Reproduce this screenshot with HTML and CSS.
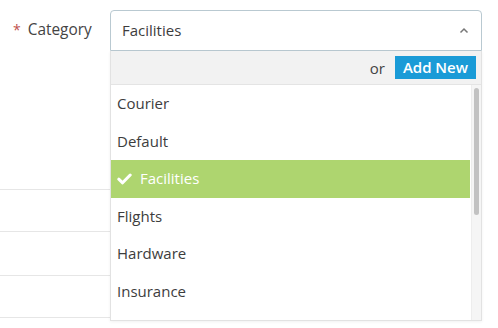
FILE: index.html
```html
<!DOCTYPE html>
<html>
<head>
<meta charset="utf-8">
<link rel="stylesheet" href="styles.css">
</head>
<body>
<div class="page">
  <div class="field">
    <div class="label"><span class="req">*</span> Category</div>
    <div class="select-wrap">
      <div class="select">
        <span class="value">Facilities</span>
        <svg class="caret" width="10" height="7" viewBox="0 0 10 7"><polyline points="1.5,5.5 5,2 8.5,5.5" fill="none" stroke="#777" stroke-width="1.5"/></svg>
      </div>
      <div class="dropdown">
        <div class="actions"><span class="or">or</span><span class="add">Add New</span></div>
        <div class="list">
          <div class="items">
            <div class="item">Courier</div>
            <div class="item">Default</div>
            <div class="item selected"><svg class="check" width="15" height="12" viewBox="0 0 15 12"><polyline points="1.8,6.2 5.6,9.8 13.2,2" fill="none" stroke="#fff" stroke-width="3" stroke-linecap="round" stroke-linejoin="round"/></svg>Facilities</div>
            <div class="item">Flights</div>
            <div class="item">Hardware</div>
            <div class="item">Insurance</div>
          </div>
          <div class="scrollbar"><div class="thumb"></div></div>
        </div>
      </div>
    </div>
  </div>
  <div class="rows">
    <div class="row r1"></div>
    <div class="row r2"></div>
    <div class="row r3"></div>
    <div class="row r4"></div>
  </div>
</div>
</body>
</html>
```
FILE: styles.css
```css
html, body {
  margin: 0;
  padding: 0;
  background: #fff;
}
body {
  font-family: "Open Sans", "Liberation Sans", sans-serif;
  font-size: 15px;
  color: #3d3d3d;
  width: 498px;
  height: 328px;
  overflow: hidden;
}
.page {
  padding-top: 10px;
}
.field {
  display: flex;
  align-items: flex-start;
  height: 41px;
}
.label {
  width: 110px;
  box-sizing: border-box;
  padding-left: 13px;
  line-height: 40px;
  color: #444;
  font-size: 15.4px;
}
.req {
  color: #c0504d;
  font-size: 14px;
  margin-right: 3px;
}
.select-wrap {
  position: relative;
  width: 372px;
}
.select {
  height: 41px;
  box-sizing: border-box;
  border: 1px solid #b9c9d1;
  border-radius: 4px 4px 0 0;
  display: flex;
  align-items: center;
  justify-content: space-between;
  padding: 0 12px 1px 11px;
  background: #fff;
}
.value {
  color: #3d3d3d;
}
.caret {
  margin-top: 1px;
}
.dropdown {
  position: absolute;
  top: 41px;
  left: 0;
  right: 0;
  background: #fff;
  border: 1px solid #e2e2e2;
  border-top: none;
  box-shadow: 0 1px 3px rgba(0,0,0,0.06);
  z-index: 2;
}
.actions {
  height: 33px;
  background: #f2f2f2;
  border-bottom: 1px solid #e4e4e4;
  display: flex;
  align-items: center;
  justify-content: flex-end;
  padding-right: 5px;
}
.or {
  color: #444;
  margin-right: 10px;
}
.add {
  background: #1a9bd7;
  color: #fff;
  font-weight: 600;
  height: 23px;
  line-height: 23px;
  padding: 0 8px;
  font-size: 15px;
}
.list {
  display: flex;
  height: 235px;
}
.items {
  flex: 1;
}
.item {
  height: 37.5px;
  line-height: 37.5px;
  padding-left: 6px;
  color: #3d3d3d;
  display: flex;
  align-items: center;
}
.item.selected {
  background: #aed56f;
  color: #fff;
}
.check {
  margin-left: 0;
  margin-right: 8px;
}
.scrollbar {
  width: 9px;
  margin-left: 1px;
  background: #f5f5f5;
  border-left: 1px solid #ededed;
  display: flex;
  justify-content: center;
}
.thumb {
  width: 5px;
  height: 127px;
  margin-top: 3px;
  background: #c2c2c2;
  border-radius: 3px;
}
.rows {
  margin-top: 97px;
}
.row {
  width: 110px;
  border-bottom: 1px solid #e6e6e6;
}
.r1 { height: 41px; }
.r2 { height: 41px; }
.r3 { height: 43px; }
.r4 { height: 41px; }
```
